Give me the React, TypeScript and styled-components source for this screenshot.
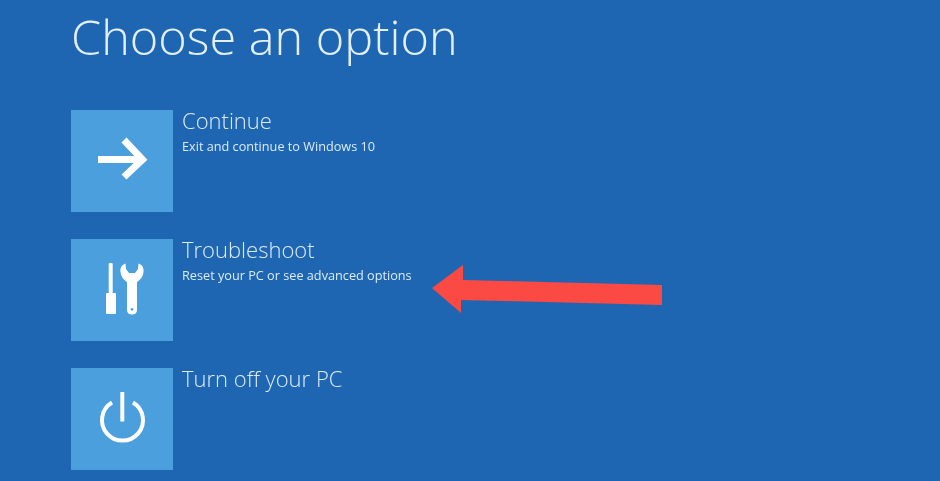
import styled, {createGlobalStyle} from "styled-components";
import type {ReactNode} from "react";

const GlobalStyle = createGlobalStyle`
    html, body {
        margin: 0;
        padding: 0;
        background: #1f66b2;
    }
`

const options: {title: string; text?: string; icon: ReactNode}[] = [
    {
        title: 'Continue',
        text: 'Exit and continue to Windows 10',
        icon: (
            <svg width="102" height="102" viewBox="0 0 102 102" fill="none">
                <path d="M27 49.500H71M53 30L71.500 49.500L53 67" stroke="#fff" strokeWidth="7"/>
            </svg>
        ),
    },
    {
        title: 'Troubleshoot',
        text: 'Reset your PC or see advanced options',
        icon: (
            <svg width="102" height="102" viewBox="0 0 102 102" fill="#fff">
                <rect x="37.700" y="24" width="4" height="31" rx="1"/>
                <rect x="35" y="54" width="10" height="21" rx="1"/>
                <path fillRule="evenodd" d="M54.500 24.500C50 26 49 30 49.500 33C50 38 53 41 56 43V71C56 74 58 75.500 61 75.500C64 75.500 66 74 66 71V43C69 41 72 38 72.500 33C73 30 72 26 67.500 24.500L67 30L64 34H58L55 30ZM61 69a1.400 1.400 0 1 0 .01 0Z"/>
            </svg>
        ),
    },
    {
        title: 'Turn off your PC',
        icon: (
            <svg width="102" height="102" viewBox="0 0 102 102" fill="none" stroke="#fff" strokeWidth="4">
                <path d="M51.300 24V53.500"/>
                <path d="M41 34.500A20.500 20.500 0 1 0 62 34.500"/>
            </svg>
        ),
    },
]

export default function App() {
    return (
        <Screen>
            <GlobalStyle/>
            <Title>Choose an option</Title>
            <OptionList>
                {options.map(option => (
                    <Option key={option.title}>
                        <Tile>{option.icon}</Tile>
                        <OptionBody>
                            <OptionTitle>{option.title}</OptionTitle>
                            {option.text && <OptionText>{option.text}</OptionText>}
                        </OptionBody>
                    </Option>
                ))}
            </OptionList>
            <RedArrow viewBox="0 0 940 481" width="940" height="481">
                <polygon points="432,288 463,265 463,280 662,285 662,305 461,300 461,313" fill="#fb4a44"/>
            </RedArrow>
        </Screen>
    );
}

const Screen = styled.div`
    position: relative;
    width: 940px;
    height: 481px;
    padding-left: 71px;
    box-sizing: border-box;
    overflow: hidden;
    background: #1f66b2;
    color: #dcecf8;
    font-family: "Open Sans", "Liberation Sans", sans-serif;
    filter: blur(0.5px);
`

const Title = styled.h1`
    margin: 0;
    padding-top: 6px;
    height: 110px;
    box-sizing: border-box;
    font-size: 48.6px;
    line-height: 60px;
    font-weight: 300;
    color: #e3eff9;
`

const OptionList = styled.div`
    display: flex;
    flex-direction: column;
    gap: 27px;
`

const Option = styled.div`
    display: flex;
    gap: 9px;
    height: 102px;
`

const Tile = styled.div`
    width: 102px;
    height: 102px;
    background: #4a9fdc;
`

const OptionBody = styled.div`
    display: flex;
    flex-direction: column;
`

const OptionTitle = styled.div`
    font-size: 22px;
    line-height: 20px;
    font-weight: 300;
`

const OptionText = styled.div`
    margin-top: 8px;
    font-size: 12.7px;
    line-height: 16px;
    font-weight: 400;
`

const RedArrow = styled.svg`
    position: absolute;
    left: 0;
    top: 0;
`
